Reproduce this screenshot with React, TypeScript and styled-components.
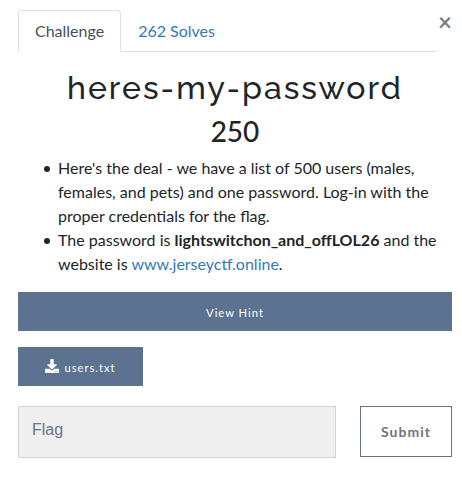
import React from "react";
import styled, { createGlobalStyle } from "styled-components";

const GlobalStyle = createGlobalStyle`
  *, *::before, *::after { box-sizing: border-box; }
  body {
    margin: 0;
    background: #fff;
    color: #212529;
    font: 400 16px/24px Lato, sans-serif;
  }
`;

const Modal = styled.main`
  width: 462px;
  height: 487px;
  padding: 10px 10px 0 18px;
  overflow: hidden;
`;

const Header = styled.header`
  display: flex;
  justify-content: space-between;
  height: 42px;
`;

const Tabs = styled.nav`
  display: flex;
  width: 420px;
  border-bottom: 1px solid #dee2e6;
`;

const Tab = styled.a<{ $active?: boolean }>`
  height: 42px;
  padding: 8px 16px;
  border: 1px solid;
  border-color: ${(p) => (p.$active ? "#dee2e6 #dee2e6 #fff" : "transparent")};
  border-radius: 4px 4px 0 0;
  color: ${(p) => (p.$active ? "#495057" : "#337ab7")};
  text-decoration: none;
  white-space: nowrap;
`;

const CloseButton = styled.button`
  display: flex;
  width: 14px;
  height: 24px;
  padding: 0;
  border: 0;
  background: none;
  color: #808080;
  font: 700 24px/24px Lato, sans-serif;
`;

const Title = styled.h2`
  margin: 17px 0 0;
  text-align: center;
  white-space: nowrap;
  font: 500 32px/38px Raleway, Lato, sans-serif;
  letter-spacing: 2px;
`;

const Points = styled.h3`
  margin: 7px 0 0;
  text-align: center;
  font: 500 28px/34px Lato, sans-serif;
`;

const Description = styled.ul`
  margin: 8px 0 16px;
  padding-left: 26px;
  list-style: none;
`;

const Point = styled.li`
  display: flex;
  gap: 8px;
  &::before {
    content: "";
    flex: 0 0 6px;
    height: 6px;
    margin-top: 10px;
    border-radius: 50%;
    background: #212529;
  }
`;

const Link = styled.a`
  color: #337ab7;
  text-decoration: none;
`;

const SolidButton = styled.button<{ $wide?: boolean }>`
  display: flex;
  align-items: center;
  justify-content: center;
  gap: 5px;
  width: ${(p) => (p.$wide ? "100%" : "125px")};
  height: 39px;
  margin: 0 0 16px;
  padding: 2px 0 0;
  border: 0;
  background: #5b7290;
  color: #fff;
  font: 400 11.2px/17px Lato, sans-serif;
  letter-spacing: 1px;
`;

const FlagForm = styled.form`
  display: flex;
  gap: 24px;
  margin-top: 20px;
`;

const FlagInput = styled.input`
  width: 318px;
  height: 52px;
  padding: 0 13px 5px;
  border: 1px solid #ced4da;
  border-radius: 0;
  background: #efefef;
  font: 400 16px/24px "Liberation Sans", Arial, sans-serif;
  outline: 0;
  &::placeholder { color: #6c757d; opacity: 1; }
`;

const SubmitButton = styled.button`
  width: 92px;
  height: 51px;
  padding: 0;
  border: 1px solid #6c757d;
  background: #fff;
  color: #6c757d;
  font: 700 14px/20px Lato, sans-serif;
  letter-spacing: 1px;
`;

const DownloadIcon = () => (
  <svg width="14" height="14" viewBox="0 0 512 512" fill="currentColor" aria-hidden="true">
    <path d="M216 0h80c13.300 0 24 10.700 24 24v168h87.700c17.800 0 26.700 21.500 14.100 34.100L269.700 378.300c-7.500 7.500-19.800 7.500-27.300 0L90.100 226.100c-12.600-12.600-3.700-34.100 14.100-34.100H192V24c0-13.300 10.700-24 24-24zm296 376v112c0 13.300-10.700 24-24 24H24c-13.300 0-24-10.700-24-24V376c0-13.300 10.700-24 24-24h146.700l49 49c20.100 20.100 52.500 20.100 72.600 0l49-49H488c13.300 0 24 10.700 24 24zm-124 88c0-11-9-20-20-20s-20 9-20 20 9 20 20 20 20-9 20-20zm64 0c0-11-9-20-20-20s-20 9-20 20 9 20 20 20 20-9 20-20z" />
  </svg>
);

const IconBox = styled.span`
  display: flex;
  margin-top: -3px;
`;

export default function App() {
  return (
    <>
      <GlobalStyle />
      <Modal>
        <Header>
          <Tabs>
            <Tab $active>Challenge</Tab>
            <Tab>262 Solves</Tab>
          </Tabs>
          <CloseButton aria-label="Close">×</CloseButton>
        </Header>
        <Title>heres-my-password</Title>
        <Points>250</Points>
        <Description>
          <Point>
            <div>
              Here's the deal - we have a list of 500 users (males, females, and pets) and one
              password. Log-in with the proper credentials for the flag.
            </div>
          </Point>
          <Point>
            <div>
              The password is <strong>lightswitchon_and_offLOL26</strong> and the website is{" "}
              <Link>www.jerseyctf.online</Link>.
            </div>
          </Point>
        </Description>
        <SolidButton $wide>View Hint</SolidButton>
        <SolidButton>
          <IconBox><DownloadIcon /></IconBox>
          users.txt
        </SolidButton>
        <FlagForm>
          <FlagInput placeholder="Flag" />
          <SubmitButton type="button">Submit</SubmitButton>
        </FlagForm>
      </Modal>
    </>
  );
}
